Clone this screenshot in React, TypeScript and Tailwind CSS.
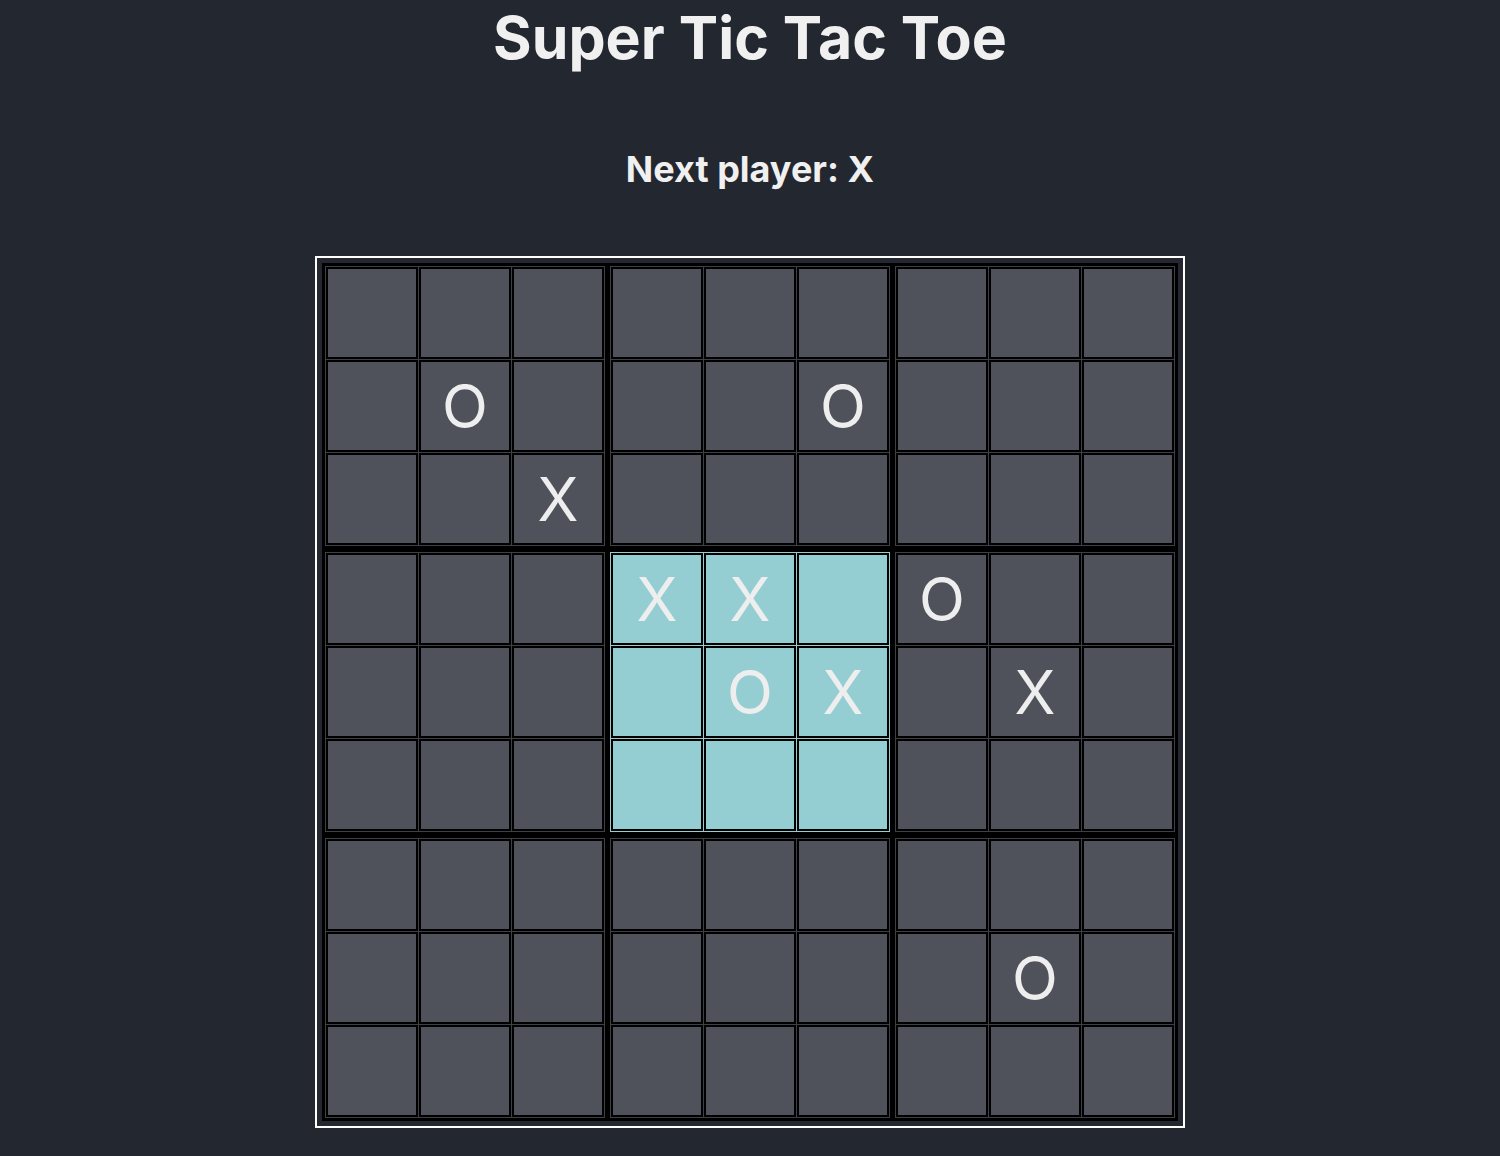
import React from "react";

type Mark = "X" | "O" | null;

const boards: Mark[][] = [
  [null, null, null, null, "O", null, null, null, "X"],
  [null, null, null, null, null, "O", null, null, null],
  [null, null, null, null, null, null, null, null, null],
  [null, null, null, null, null, null, null, null, null],
  ["X", "X", null, null, "O", "X", null, null, null],
  ["O", null, null, null, "X", null, null, null, null],
  [null, null, null, null, null, null, null, null, null],
  [null, null, null, null, null, null, null, null, null],
  [null, null, null, null, "O", null, null, null, null],
];

const ACTIVE = 4;

function SubBoard({ cells, active }: { cells: Mark[]; active: boolean }) {
  return (
    <div
      className={
        "grid grid-cols-3 gap-px p-px border-2 border-black " +
        (active ? "bg-[#94ced3]" : "bg-[#3d4047]")
      }
    >
      {cells.map((c, i) => (
        <div
          key={i}
          className={
            "w-[92px] h-[92px] border-2 border-black flex items-center justify-center text-[60px] leading-none font-normal text-[#eeeeee] " +
            (active ? "bg-[#94ced3]" : "bg-[#4f525b]")
          }
        >
          {c}
        </div>
      ))}
    </div>
  );
}

export default function App() {
  return (
    <div className="min-h-screen bg-[#23272f] flex flex-col items-center font-['Inter',sans-serif] text-[#f0f0f0]">
      <h1 className="text-[59px] leading-[76px] font-bold">Super Tic Tac Toe</h1>
      <div className="mt-[73px] text-[36px] leading-[40px] font-bold">Next player: X</div>
      <div className="mt-[67px] border-2 border-white p-[5px]">
        <div className="grid grid-cols-3 gap-x-px gap-y-[2px] bg-black border border-black">
          {boards.map((b, i) => (
            <SubBoard key={i} cells={b} active={i === ACTIVE} />
          ))}
        </div>
      </div>
    </div>
  );
}
